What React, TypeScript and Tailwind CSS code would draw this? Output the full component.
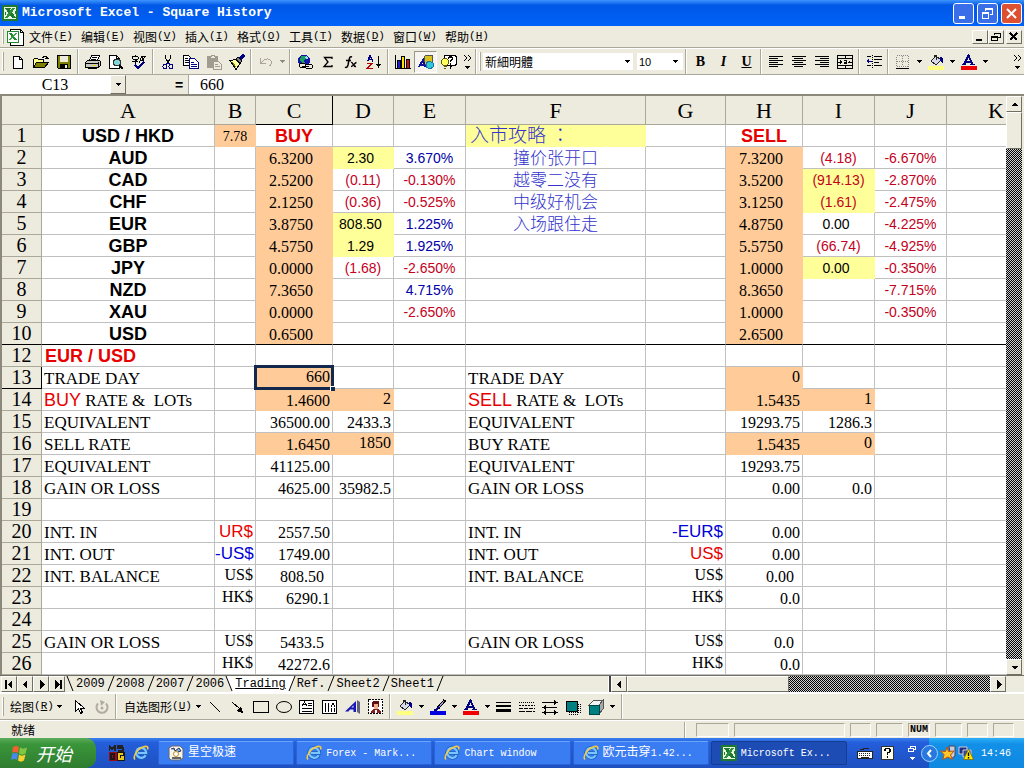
import { useState } from 'react'
import type { ReactNode } from 'react'

// ---------- icons ----------

const Svg = ({ children, w = 16, h = 16, smooth = false }: { children: ReactNode; w?: number; h?: number; smooth?: boolean }) => (
    <svg width={w} height={h} viewBox={`0 0 ${w} ${h}`} fill="none" stroke="none" className="shrink-0" shapeRendering={smooth ? 'auto' : 'crispEdges'} aria-hidden="true">
        {children}
    </svg>
)

const ExcelIcon = () => (
    <Svg>
        <rect width="16" height="16" fill="#1f7a2e" />
        <rect x="2" y="2" width="12" height="12" fill="#e8f4e4" />
        <path d="M3 3h4l7 10h-4z" fill="#1f7a2e" />
        <path d="M10 3h3L6 13H3z" fill="#2f9140" />
        <path d="M7 3h2M3 7v3M13 6v3" stroke="#1f7a2e" />
    </Svg>
)

const SheetIcon = () => (
    <Svg w={18} h={18}>
        <path d="M4 1h10l3 3v13H4z" fill="#fff" stroke="#000" />
        <path d="M14 1v3h3" stroke="#000" />
        <rect x="1" y="3" width="11" height="11" fill="#fff" stroke="#1f8a2e" />
        <path d="M3 5h3l5 7H8z" fill="#1f8a2e" />
        <path d="M9 5h2l-6 7H3z" fill="#39a548" />
    </Svg>
)

const IeIcon = () => (
    <Svg smooth>
        <path d="M12.8 10.2A5.2 5.2 0 1 1 13.4 8H5" stroke="#1d62c4" strokeWidth="3.6" />
        <path d="M12.6 10.2A5 5 0 1 1 13.2 8H5" stroke="#7cc6ff" strokeWidth="2.2" />
        <path d="M2 14.500C-.5 12 4 4 10 2c4-1.600 5.500 0 4.500 2.500" stroke="#f5c945" strokeWidth="1.600" />
    </Svg>
)

const NewIcon = () => (
    <Svg><path d="M3.500 2.500h6l3 3v9h-9z" fill="#fff" stroke="#000" /><path d="M9.500 2.500v3h3" stroke="#000" /></Svg>
)
const OpenIcon = () => (
    <Svg>
        <path d="M.5 13.500v-8l1-1h3l1 1h5v3" fill="#ffff8c" stroke="#000" />
        <path d="M.5 13.500l3-5h12l-4 5z" fill="#808000" stroke="#000" />
        <path d="M9 3h1V2h3v1h1v2M12 4h4" stroke="#000" />
    </Svg>
)
const SaveIcon = () => (
    <Svg>
        <path d="M1.500 1.500h13v13h-12l-1-1z" fill="#808000" stroke="#000" />
        <rect x="4" y="2" width="8" height="6" fill="#edeade" />
        <rect x="4" y="10" width="8" height="4" fill="#000" />
        <rect x="9" y="11" width="2" height="3" fill="#edeade" />
    </Svg>
)
const PrintIcon = () => (
    <Svg>
        <path d="M4.500 6.500l2-5h8l-2 5" fill="#fff" stroke="#000" />
        <path d="M7 3h5M6 5h5" stroke="#000" />
        <path d="M.5 8.500l2-2h12l1 1v4l-2 2h-13z" fill="#c8c8c0" stroke="#000" />
        <path d="M1 9.500h12M13.500 8v5" stroke="#000" />
        <path d="M8 11.500h3" stroke="#e8d800" />
        <path d="M3 14.500h9" stroke="#000" />
    </Svg>
)
const PreviewIcon = () => (
    <Svg>
        <path d="M1.500 1.500h7l3 3v10h-10z" fill="#fff" stroke="#000" />
        <path d="M8.500 1.500v3h3" stroke="#000" />
        <circle cx="9" cy="8.500" r="3.500" fill="#7fd4d4" stroke="#333" />
        <path d="M11.500 11.500l3.500 3.500" stroke="#000" strokeWidth="2" />
    </Svg>
)
const SpellIcon = () => (
    <Svg>
        <path d="M1 2.500h6M4 1v2M1 3v2M7 3v2M2 5.500h4l-2 2v2M1 7.500h6" stroke="#000" />
        <path d="M8 9l3-7 2 7M9 6.500h4M11 2.500h4M14 2l-2 4" stroke="#000" />
        <path d="M4 11l3 3 6-6" stroke="#000080" strokeWidth="2" />
    </Svg>
)
const CutIcon = () => (
    <Svg>
        <path d="M5.500 1v3l3 5M10.500 1v3l-3 5" stroke="#000" />
        <path d="M7.500 9l-2 2M8.500 9l2 2" stroke="#000080" />
        <circle cx="5" cy="12.500" r="2" stroke="#000080" />
        <circle cx="11" cy="12.500" r="2" stroke="#000080" />
    </Svg>
)
const CopyIcon = () => (
    <Svg>
        <path d="M.5 1.500h5l3 3v7h-8z" fill="#fff" stroke="#000" />
        <path d="M2 4.500h3M2 6.500h4M2 8.500h4" stroke="#000" />
        <path d="M6.500 4.500h5l4 4v6h-9z" fill="#fff" stroke="#000080" />
        <path d="M8 8.500h3M8 10.500h6M8 12.500h6" stroke="#000080" />
    </Svg>
)
const PasteIcon = () => (
    <Svg>
        <rect x="1" y="2" width="11" height="12" rx="1" fill="#a09c90" />
        <path d="M4 4V2h1V1h3v1h1v2z" fill="#edeade" stroke="#a09c90" />
        <path d="M7.500 7.500h5l3 3v5h-8z" fill="#edeade" stroke="#a09c90" />
        <path d="M9 10.500h3M9 12.500h5" stroke="#a09c90" />
    </Svg>
)
const BrushIcon = () => (
    <Svg>
        <path d="M1 6.500l6-1 4 4-4 6z" fill="#ffffa0" stroke="#000" />
        <path d="M3 8l4 5" stroke="#808000" />
        <path d="M7 5l2-2 4 4-2 2z" fill="#808080" stroke="#000" />
        <path d="M11 5l4-4" stroke="#000080" strokeWidth="3" />
    </Svg>
)
const UndoIcon = () => (
    <Svg><path d="M2.500 4v5.500H8M3 9l3-3c3-2 6-1 7 1s0 4-2 5" stroke="#a8a498" /></Svg>
)
const GlobeIcon = () => (
    <Svg>
        <circle cx="7" cy="6.500" r="6" fill="#1414a8" />
        <path d="M4 2h4l2 2-3 2 1 3H5L3 6z" fill="#18a060" />
        <path d="M9 3l2 2" stroke="#9fe0ff" strokeWidth="2" />
        <rect x="2.500" y="9.500" width="6" height="4" rx="2" fill="#edeade" stroke="#000" />
        <rect x="8.500" y="10.500" width="7" height="4" rx="2" fill="#edeade" stroke="#000" />
        <path d="M5 12.500h7" stroke="#000" />
    </Svg>
)
const SigmaIcon = () => (
    <Svg smooth><path d="M12 5V3.500H4.500L8 8l-4 4.500h8V11" stroke="#000" strokeWidth="1.300" /></Svg>
)
const FxIcon = () => (
    <Svg smooth>
        <path d="M9 3c-2-1-2.500.5-3 3l-1 5c-.5 2-1.500 3-3 2M3 6.500h5" stroke="#000" strokeWidth="1.500" />
        <path d="M8 8.500c2-1 2 4.500 5 4M13.500 8.500c-2 0-3 4-5.500 4" stroke="#000" strokeWidth="1.400" />
    </Svg>
)
const SortIcon = () => (
    <Svg>
        <path d="M1.500 7.500l2.500-6 3 6M2.500 5.500h4" stroke="#000080" strokeWidth="1.500" />
        <path d="M1 9.500h5L1.500 14.500H7" stroke="#b00000" strokeWidth="1.500" />
        <path d="M12.500 2v11" stroke="#000" />
        <path d="M10 10h5l-2.500 4z" fill="#000" />
    </Svg>
)
const ChartIcon = () => (
    <Svg>
        <path d="M.5 1v13.500h15" stroke="#000" />
        <path d="M2.500 6.500h3v8h-3z" fill="#2020d0" stroke="#000" />
        <path d="M6.500 2.500h3v12h-3z" fill="#ffe000" stroke="#000" />
        <path d="M11.500 5.500h3v9h-3z" fill="#d01010" stroke="#000" />
    </Svg>
)
const DrawingIcon = () => (
    <Svg>
        <path d="M6 3l2-2h6v7l-2 2H6z" fill="#d8c020" stroke="#555" />
        <path d="M1 13l4-7 2 7M3 10.500h4" stroke="#1010a0" strokeWidth="2" />
        <path d="M8 9l3-2 4 2v4l-3 2-4-2z" fill="#30c8d8" stroke="#1878a0" />
    </Svg>
)
const HelpIcon = () => (
    <Svg>
        <path d="M3 1.500h11l1.500 1.500v7l-1.500 1.500h-3l-2 3v-3H3z" fill="#fff" stroke="#000" />
        <path d="M7.500 5V4l1-1h2l1 1v1.500l-2 1.500v1M9.500 9v1.500" stroke="#000" strokeWidth="1.500" />
        <circle cx="4" cy="8" r="3.500" fill="#ffff60" stroke="#605800" />
        <path d="M3 12.500h3M3 14.500h2" stroke="#605800" />
    </Svg>
)
const AlignIcon = ({ offset }: { offset: number }) => (
    <Svg>
        <path d="M1 2.500h14M1 6.500h14M1 10.500h14" stroke="#000" />
        <path d={`M${1 + offset} 4.500h9M${1 + offset} 8.500h9M${1 + offset} 12.500h9`} stroke="#000" />
    </Svg>
)
const MergeIcon = () => (
    <Svg>
        <path d="M.5 1.500h15v13H.5zM0 4.500h16M0 11.500h16M8.500 1v3M8.500 12v3" stroke="#000" />
        <path d="M1 8h4M11 8h4" stroke="#000" />
        <path d="M3 6v4l2-2zM13 6v4l-2-2z" fill="#000" />
        <path d="M7 6.500h2.500v3H7v-1.500h2" stroke="#000" />
    </Svg>
)
const IndentIcon = () => (
    <Svg>
        <path d="M1 2.500h4M8 2.500h8M8 5.500h8M8 8.500h5M1 11.500h4M8 11.500h8" stroke="#000" strokeWidth="1.500" />
        <path d="M6.500 1v14" stroke="#000" strokeDasharray="1 1" />
        <path d="M1 7h5" stroke="#000080" />
        <path d="M0 7l3-3v6z" fill="#000080" />
    </Svg>
)
const BordersIcon = () => (
    <Svg>
        <path d="M1.500 1.500h12v11h-12zM7.500 2v10M2 7.500h11" stroke="#888" strokeDasharray="1 1" />
        <path d="M1 14.500h13" stroke="#000" />
    </Svg>
)
const BucketIcon = () => (
    <Svg>
        <path d="M3 7l5-5 5 4-5 5z" fill="#d8d8e8" stroke="#222" />
        <path d="M6 4V1h2v5" stroke="#222" />
        <path d="M12 3c3 0 4 3 3 7-1-2-2-3-3-3z" fill="#000080" />
        <rect y="12" width="16" height="4" fill="#ffff80" />
    </Svg>
)
const FontColorIcon = () => (
    <Svg>
        <path d="M3 10.500l4.500-9 4 9M5 7.500h5" stroke="#000080" strokeWidth="2" />
        <path d="M1 10.500h4M9 10.500h5" stroke="#000080" />
        <rect y="12" width="16" height="4" fill="#f00000" />
    </Svg>
)
const LineColorIcon = () => (
    <Svg>
        <path d="M15 1L8 9" stroke="#000" strokeWidth="3" />
        <path d="M14 2L9 8" stroke="#9a9ad0" />
        <path d="M8 7l2 2-4 3-4-1 3-1z" fill="#000080" />
        <rect y="12" width="16" height="4" fill="#0000e0" />
    </Svg>
)
const PointerIcon = () => (
    <Svg><path d="M4.500 1.500v11l3-3 2 5 2-1-2-4h4z" fill="#fff" stroke="#000" /></Svg>
)
const RotateIcon = () => (
    <Svg smooth>
        <path d="M4 4.500a5.500 5.500 0 1 0 8 0" stroke="#b0aca0" strokeWidth="2" />
        <path d="M6 1l5 2-4 4z" fill="#b0aca0" />
        <circle cx="8" cy="9" r="1.500" fill="#b0aca0" />
    </Svg>
)
const LineIcon = () => <Svg><path d="M3 3l10 10" stroke="#000" /></Svg>
const ArrowIcon = () => <Svg><path d="M2 3l8 7" stroke="#000" /><path d="M13 14l-7-2 5-5z" fill="#000" /></Svg>
const RectIcon = () => <Svg><rect x=".5" y="2.500" width="15" height="11" stroke="#000" /></Svg>
const OvalIcon = () => <Svg smooth><ellipse cx="8" cy="8" rx="7.500" ry="5.500" stroke="#000" /></Svg>
const TextBoxIcon = () => (
    <Svg>
        <path d="M.5 1.500h14v13H.5z" fill="#fff" stroke="#000" strokeWidth="1.500" />
        <path d="M3 7l2.500-4L8 7M4 5.500h3M9 4.500h4M9 6.500h4M3 9.500h10M3 12.500h10" stroke="#000" />
    </Svg>
)
const VertTextIcon = () => (
    <Svg>
        <path d="M.5 1.500h14v13H.5z" fill="#fff" stroke="#000" strokeWidth="1.500" />
        <path d="M3.500 4v9M6.500 4v9M9.500 9v4M12.500 9v4M9 8l2-4 2 4" stroke="#000" />
    </Svg>
)
const WordArtIcon = () => (
    <Svg smooth>
        <path d="M12 1l3 2v12l-3-2z" fill="#606080" />
        <path d="M0 12.500L11 2v11H8.500v-2.500H5L3.500 12.500z" fill="#1818b8" />
        <path d="M6.500 8.500l2-2.200v2.200z" fill="#edeade" />
    </Svg>
)
const ClipArtIcon = () => (
    <Svg>
        <rect x=".5" y=".5" width="14" height="14" fill="#fff" stroke="#000" strokeDasharray="2 1" />
        <path d="M5 2h5l1 1v5H4V3z" fill="#601010" />
        <path d="M6 5h4v5H6z" fill="#f0b090" />
        <path d="M3 14c0-3 2-4 5-4s5 1 5 4z" fill="#802020" />
        <path d="M7 11h2v3H7z" fill="#fff" />
    </Svg>
)
const LineStyleIcon = () => <Svg><path d="M0 3.500h15" stroke="#000" /><path d="M0 7h15" stroke="#000" strokeWidth="2" /><path d="M0 11.500h15" stroke="#000" strokeWidth="3" /></Svg>
const DashStyleIcon = () => (
    <Svg>
        <path d="M0 3.500h16" stroke="#000" strokeDasharray="1 1" />
        <path d="M0 6.500h16" stroke="#000" strokeDasharray="2 1" />
        <path d="M0 9.500h16" stroke="#000" strokeDasharray="4 1" />
        <path d="M0 12.500h16" stroke="#000" strokeDasharray="6 1" />
    </Svg>
)
const ArrowStyleIcon = () => (
    <Svg>
        <path d="M0 3.500h14M1 8.500h14M1 13.500h14" stroke="#000" />
        <path d="M12 1l4 2.500L12 6zM4 6L0 8.500 4 11zM12 11l4 2.500-4 2.500zM4 11l-4 2.500L4 16z" fill="#000" />
    </Svg>
)
const ShadowIcon = () => (
    <Svg>
        <path d="M4 13.500h10M4 15h10M13.500 5v10M15 5v10" stroke="#000" strokeDasharray="1 1" />
        <rect x="1.500" y="2.500" width="11" height="10" fill="#008080" stroke="#000" />
    </Svg>
)
const CubeIcon = () => (
    <Svg>
        <path d="M1 6l5-5h9l-4 5z" fill="#f4f4f4" stroke="#555" />
        <path d="M11 6l4-5v9l-4 5z" fill="#a8a8a8" stroke="#555" />
        <rect x="1" y="6" width="10" height="9" fill="#008080" stroke="#044" />
    </Svg>
)
const Caret = () => (
    <Svg w={5} h={3}><path d="M0 0h5L2.500 3z" fill="#000" /></Svg>
)
const MoreIcon = () => (
    <Svg w={9} h={16}><path d="M1 1l3 3-3 3M5 1l3 3-3 3" stroke="#000" strokeWidth="1.300" /><path d="M2 12h5l-2.500 3z" fill="#000" /></Svg>
)
const Tri = ({ d }: { d: string }) => <Svg w={9} h={9}><path d={d} fill="#000" /></Svg>
const TRI_LEFT = 'M6 0v9L1.500 4.500z'
const TRI_RIGHT = 'M3 0v9l4.500-4.500z'
const TRI_UP = 'M1 6h7L4.500 2.500z'
const TRI_DOWN = 'M1 3h7L4.500 6.500z'

// ---------- toolbar parts ----------

const ToolButton = ({ label, children, pressed = false }: { label: string; children: ReactNode; pressed?: boolean }) => (
    <button
        aria-label={label}
        className={`flex h-[22px] w-[23px] shrink-0 items-center justify-center ${pressed ? 'border border-t-[#9a968a] border-r-white border-b-white border-l-[#9a968a] bg-[#f6f4ee]' : ''}`}
    >
        {children}
    </button>
)

const CaretButton = ({ label }: { label: string }) => (
    <button aria-label={label} className="flex h-[22px] w-[10px] shrink-0 items-center justify-center"><Caret /></button>
)

const Sep = () => (
    <div className="flex w-[6px] shrink-0 justify-center self-stretch">
        <div className="w-[2px] border-l border-[#aca899] bg-white" />
    </div>
)

const Grip = () => <div className="mx-[2px] my-[3px] w-[2px] shrink-0 self-stretch border-r border-[#aca899] bg-white" />

const MenuLabel = ({ text, hot }: { text: string; hot: string }) => (
    <>
        {text}
        <span className="font-['Liberation_Mono',monospace] text-[11px]">(<u>{hot}</u>)</span>
    </>
)

const menus = [
    ['文件', 'F'],
    ['编辑', 'E'],
    ['视图', 'V'],
    ['插入', 'I'],
    ['格式', 'O'],
    ['工具', 'T'],
    ['数据', 'D'],
    ['窗口', 'W'],
    ['帮助', 'H'],
]

const TitleBar = () => (
    <header className="flex h-[26px] items-center gap-[3px] bg-linear-to-b from-[#3c94fe] via-[#0058e6] via-20% to-[#0062fa] px-[2px]">
        <ExcelIcon />
        <h1 className="ml-[1px] flex-1 whitespace-nowrap font-['Liberation_Mono',monospace] text-[13px] font-bold text-white">Microsoft Excel - Square History</h1>
        <button aria-label="Minimize" className="flex h-[21px] w-[21px] items-center justify-center rounded-[3px] border border-white bg-[#3a6ee8]">
            <Svg w={13} h={13}><path d="M2 9h6v3H2z" fill="#fff" /></Svg>
        </button>
        <button aria-label="Restore" className="flex h-[21px] w-[21px] items-center justify-center rounded-[3px] border border-white bg-[#3a6ee8]">
            <Svg w={13} h={13}><path d="M4.500 4V1.500h7v6H9" stroke="#fff" /><path d="M4 2h8" stroke="#fff" strokeWidth="2" /><path d="M1.500 5.500h6v6h-6z" stroke="#fff" /><path d="M1 6h7" stroke="#fff" strokeWidth="2" /></Svg>
        </button>
        <button aria-label="Close" className="flex h-[21px] w-[21px] items-center justify-center rounded-[3px] border border-white bg-[#dd5030]">
            <Svg w={13} h={13} smooth><path d="M2 2l9 9M11 2l-9 9" stroke="#fff" strokeWidth="2" /></Svg>
        </button>
    </header>
)

const smallBtn = 'flex h-[14px] w-[16px] items-center justify-center border border-t-white border-r-[#716f64] border-b-[#716f64] border-l-white'

const MenuBar = () => (
    <nav className="flex h-[22px] items-center border-b border-[#aca899] pr-[2px] text-[12px]">
        <Grip />
        <SheetIcon />
        <div className="flex flex-1 pl-[1px]">
            {menus.map(([text, hot]) => (
                <button key={hot} className="flex w-[52px] shrink-0 items-center justify-center whitespace-nowrap">
                    <MenuLabel text={text} hot={hot} />
                </button>
            ))}
        </div>
        <button aria-label="Minimize workbook" className={smallBtn}><Svg w={10} h={10}><path d="M1 8h6" stroke="#000" strokeWidth="2" /></Svg></button>
        <button aria-label="Restore workbook" className={smallBtn}><Svg w={10} h={10}><path d="M3.500 3V1.500h6v4H7M3 1.500h7M.5 4.500h6v4h-6zM0 5.500h7" stroke="#000" /></Svg></button>
        <button aria-label="Close workbook" className={`ml-[2px] ${smallBtn}`}><Svg w={10} h={10}><path d="M1 1l7 7M8 1L1 8" stroke="#000" strokeWidth="2" /></Svg></button>
    </nav>
)

const Toolbars = () => (
    <div className="flex h-[27px] items-center border-t border-b border-t-white border-b-[#aca899]">
        <Grip />
        <ToolButton label="New"><NewIcon /></ToolButton>
        <ToolButton label="Open"><OpenIcon /></ToolButton>
        <ToolButton label="Save"><SaveIcon /></ToolButton>
        <Sep />
        <ToolButton label="Print"><PrintIcon /></ToolButton>
        <ToolButton label="Print preview"><PreviewIcon /></ToolButton>
        <ToolButton label="Spelling"><SpellIcon /></ToolButton>
        <Sep />
        <ToolButton label="Cut"><CutIcon /></ToolButton>
        <ToolButton label="Copy"><CopyIcon /></ToolButton>
        <ToolButton label="Paste"><PasteIcon /></ToolButton>
        <ToolButton label="Format painter"><BrushIcon /></ToolButton>
        <Sep />
        <ToolButton label="Undo"><UndoIcon /></ToolButton>
        <button aria-label="Undo list" className="flex h-[22px] w-[10px] shrink-0 items-center justify-center opacity-40"><Caret /></button>
        <Sep />
        <ToolButton label="Insert hyperlink"><GlobeIcon /></ToolButton>
        <ToolButton label="AutoSum"><SigmaIcon /></ToolButton>
        <ToolButton label="Paste function"><FxIcon /></ToolButton>
        <ToolButton label="Sort ascending"><SortIcon /></ToolButton>
        <Sep />
        <ToolButton label="Chart wizard"><ChartIcon /></ToolButton>
        <ToolButton label="Drawing" pressed><DrawingIcon /></ToolButton>
        <ToolButton label="Help"><HelpIcon /></ToolButton>
        <button aria-label="More buttons" className="flex w-[15px] shrink-0 justify-center"><MoreIcon /></button>
        <div className="w-[2px] self-stretch border-l border-[#aca899] bg-white" />
        <Grip />
        <div className="flex h-[17px] w-[150px] shrink-0 items-center bg-white pr-[3px]">
            <select aria-label="Font" className="h-[17px] flex-1 appearance-none pl-[2px] font-['Noto_Sans_CJK_TC',sans-serif] text-[12px] leading-[16px]">
                <option>新細明體</option>
            </select>
            <Caret />
        </div>
        <div className="ml-[4px] flex h-[17px] w-[46px] shrink-0 items-center bg-white pr-[5px]">
            <select aria-label="Font size" className="h-[17px] w-[30px] flex-1 appearance-none pl-[2px] font-['Liberation_Sans',sans-serif] text-[11px] leading-[16px]">
                <option>10</option>
            </select>
            <Caret />
        </div>
        <Sep />
        <ToolButton label="Bold"><span className="font-['Liberation_Serif',serif] text-[14px] font-bold">B</span></ToolButton>
        <ToolButton label="Italic"><span className="font-['Liberation_Serif',serif] text-[14px] font-bold italic">I</span></ToolButton>
        <ToolButton label="Underline"><span className="font-['Liberation_Serif',serif] text-[14px] font-bold underline">U</span></ToolButton>
        <Sep />
        <ToolButton label="Align left"><AlignIcon offset={0} /></ToolButton>
        <ToolButton label="Center"><AlignIcon offset={2} /></ToolButton>
        <ToolButton label="Align right"><AlignIcon offset={5} /></ToolButton>
        <ToolButton label="Merge and center"><MergeIcon /></ToolButton>
        <Sep />
        <ToolButton label="Decrease indent"><IndentIcon /></ToolButton>
        <Sep />
        <ToolButton label="Borders"><BordersIcon /></ToolButton>
        <CaretButton label="Border list" />
        <ToolButton label="Fill color"><BucketIcon /></ToolButton>
        <CaretButton label="Fill color list" />
        <ToolButton label="Font color"><FontColorIcon /></ToolButton>
        <CaretButton label="Font color list" />
        <div className="flex-1" />
        <button aria-label="More formatting buttons" className="mr-[2px] shrink-0"><MoreIcon /></button>
    </div>
)

const FormulaBar = () => {
    const [name, setName] = useState('C13')
    const [formula, setFormula] = useState('660')
    return (
        <div className="flex h-[21px] items-stretch border-b-2 border-[#8c897c] font-['Liberation_Serif',serif] text-[16px]">
            <input aria-label="Name box" value={name} onChange={(e) => setName(e.target.value)} className="w-[110px] bg-white text-center" />
            <button aria-label="Names" className="flex w-[16px] items-center justify-center border border-t-white border-r-[#716f64] border-b-[#716f64] border-l-white"><Caret /></button>
            <div className="w-[44px]" />
            <button aria-label="Edit formula" className="w-[18px] font-['Liberation_Sans',sans-serif] text-[14px] leading-[18px] font-bold">=</button>
            <input aria-label="Formula" value={formula} onChange={(e) => setFormula(e.target.value)} className="min-w-0 flex-1 border-l border-[#aca899] bg-white pl-[11px]" />
        </div>
    )
}

// ---------- sheet ----------

type Fill = 'orange' | 'yellow'
type Cell = { v: ReactNode; s: string; fill?: Fill }
type Row = { n: number; cells: Record<string, Cell> }

const cols = ['A', 'B', 'C', 'D', 'E', 'F', 'G', 'H', 'I', 'J', 'K']

// text styles
const code = "text-center font-['Liberation_Sans',sans-serif] text-[18px] font-bold pt-[2px]"
const rate = "text-center font-['Liberation_Serif',serif] text-[16px] pt-[3px] pr-[6px]"
const num = "text-right font-['Liberation_Serif',serif] text-[16px] pt-[3px] pr-[2px]"
const numIn = "text-right font-['Liberation_Serif',serif] text-[16px] pt-[3px] pr-[8px]"
const numUp = "text-right font-['Liberation_Serif',serif] text-[16px] pt-[1px] pr-[2px]"
const label = "font-['Liberation_Serif',serif] text-[17px] pt-[3px] pl-[2px]"
const mixed = "font-['Liberation_Serif',serif] text-[17px] pt-[2px] pl-[2px]"
const small = "text-center font-['Liberation_Sans',sans-serif] text-[14px] pt-[2px]"
const cur = "text-right font-['Liberation_Sans',sans-serif] text-[17px] pt-[2px] pr-[2px]"
const tip = "text-center font-['Liberation_Serif','Noto_Sans_CJK_SC',sans-serif] text-[17px] font-light pt-[3px] text-[#3333cc]"
const tipHead = "font-['Liberation_Serif','Noto_Sans_CJK_SC',sans-serif] text-[19px] font-light pt-[2px] pl-[4px] text-[#3333cc]"

const pos = (v: string, fill?: Fill): Cell => ({ v, s: `${small} pr-[5px]`, fill })
const neg = (v: string, fill?: Fill): Cell => ({ v, s: `${small} text-[#c4001c]`, fill })
const pct = (v: string): Cell => ({ v, s: v.startsWith('-') ? `${small} text-[#c4001c]` : `${small} text-[#0000a8]` })
const orange = (v: string, s: string): Cell => ({ v, s, fill: 'orange' })
const text = (v: ReactNode, s: string = label): Cell => ({ v, s })

const red = 'text-[#e80000]'
const blue = 'text-[#0000d8]'

const rows: Row[] = [
    {
        n: 1,
        cells: {
            A: text('USD / HKD', code),
            B: orange('7.78', "text-center font-['Liberation_Serif',serif] text-[14px] pt-[3px]"),
            C: text('BUY', `${code} ${red}`),
            F: { v: <>入市攻略 <span className="font-['Liberation_Serif','Noto_Sans_CJK_TC',sans-serif]">：</span></>, s: tipHead, fill: 'yellow' },
            H: text('SELL', `${code} ${red}`),
        },
    },
    { n: 2, cells: { A: text('AUD', code), C: orange('6.3200', rate), D: pos('2.30', 'yellow'), E: pct('3.670%'), F: text('撞价张开口', tip), H: orange('7.3200', rate), I: neg('(4.18)'), J: pct('-6.670%') } },
    { n: 3, cells: { A: text('CAD', code), C: orange('2.5200', rate), D: neg('(0.11)'), E: pct('-0.130%'), F: text('越零二没有', tip), H: orange('3.5200', rate), I: neg('(914.13)', 'yellow'), J: pct('-2.870%') } },
    { n: 4, cells: { A: text('CHF', code), C: orange('2.1250', rate), D: neg('(0.36)'), E: pct('-0.525%'), F: text('中级好机会', tip), H: orange('3.1250', rate), I: neg('(1.61)', 'yellow'), J: pct('-2.475%') } },
    { n: 5, cells: { A: text('EUR', code), C: orange('3.8750', rate), D: pos('808.50', 'yellow'), E: pct('1.225%'), F: text('入场跟住走', tip), H: orange('4.8750', rate), I: pos('0.00'), J: pct('-4.225%') } },
    { n: 6, cells: { A: text('GBP', code), C: orange('4.5750', rate), D: pos('1.29', 'yellow'), E: pct('1.925%'), H: orange('5.5750', rate), I: neg('(66.74)'), J: pct('-4.925%') } },
    { n: 7, cells: { A: text('JPY', code), C: orange('0.0000', rate), D: neg('(1.68)'), E: pct('-2.650%'), H: orange('1.0000', rate), I: pos('0.00', 'yellow'), J: pct('-0.350%') } },
    { n: 8, cells: { A: text('NZD', code), C: orange('7.3650', rate), E: pct('4.715%'), H: orange('8.3650', rate), J: pct('-7.715%') } },
    { n: 9, cells: { A: text('XAU', code), C: orange('0.0000', rate), E: pct('-2.650%'), H: orange('1.0000', rate), J: pct('-0.350%') } },
    { n: 10, cells: { A: text('USD', code), C: orange('0.6500', rate), H: orange('2.6500', rate) } },
    { n: 12, cells: { A: text('EUR / USD', "font-['Liberation_Sans',sans-serif] text-[18px] font-bold pt-[2px] pl-[3px] text-[#e80000]") } },
    { n: 13, cells: { A: text('TRADE DAY'), C: orange('660', numUp), F: text('TRADE DAY'), H: orange('0', numUp) } },
    {
        n: 14,
        cells: {
            A: text(<><span className="font-['Liberation_Sans',sans-serif] text-[18px] text-[#e80000]">BUY</span>{' RATE &  LOTs'}</>, mixed),
            C: orange('1.4600', num),
            D: orange('2', numUp),
            F: text(<><span className="font-['Liberation_Sans',sans-serif] text-[18px] text-[#e80000]">SELL</span>{' RATE &  LOTs'}</>, mixed),
            H: orange('1.5435', num),
            I: orange('1', numUp),
        },
    },
    { n: 15, cells: { A: text('EQUIVALENT'), C: text('36500.00', num), D: text('2433.3', num), F: text('EQUIVALENT'), H: text('19293.75', num), I: text('1286.3', num) } },
    { n: 16, cells: { A: text('SELL RATE'), C: orange('1.6450', num), D: orange('1850', numUp), F: text('BUY RATE'), H: orange('1.5435', num), I: orange('0', numUp) } },
    { n: 17, cells: { A: text('EQUIVALENT'), C: text('41125.00', num), F: text('EQUIVALENT'), H: text('19293.75', num) } },
    { n: 18, cells: { A: text('GAIN OR LOSS'), C: text('4625.00', num), D: text('35982.5', num), F: text('GAIN OR LOSS'), H: text('0.00', num), I: text('0.0', num) } },
    { n: 19, cells: {} },
    { n: 20, cells: { A: text('INT. IN'), B: text('UR$', `${cur} ${red}`), C: text('2557.50', num), F: text('INT. IN'), G: text('-EUR$', `${cur} ${blue}`), H: text('0.00', num) } },
    { n: 21, cells: { A: text('INT. OUT'), B: text('-US$', `${cur} ${blue}`), C: text('1749.00', num), F: text('INT. OUT'), G: text('US$', `${cur} ${red}`), H: text('0.00', num) } },
    { n: 22, cells: { A: text('INT. BALANCE'), B: text('US$', numUp), C: text('808.50', numIn), F: text('INT. BALANCE'), G: text('US$', numUp), H: text('0.00', numIn) } },
    { n: 23, cells: { B: text('HK$', numUp), C: text('6290.1', num), G: text('HK$', numUp), H: text('0.0', num) } },
    { n: 24, cells: {} },
    { n: 25, cells: { A: text('GAIN OR LOSS'), B: text('US$', numUp), C: text('5433.5', numIn), F: text('GAIN OR LOSS'), G: text('US$', numUp), H: text('0.0', numIn) } },
    { n: 26, cells: { B: text('HK$', numUp), C: text('42272.6', num), G: text('HK$', numUp), H: text('0.0', num) } },
]

const fillClass = (fill?: Fill) => {
    if (fill === 'orange') return 'bg-[#ffcc99] border-[#ffcc99]'
    if (fill === 'yellow') return 'bg-[#ffff99] border-[#ffff99]'
    return 'bg-white border-[#c0c0c0]'
}

const Sheet = () => (
    <table className="w-full flex-1 table-fixed border-separate border-spacing-0">
        <colgroup>
            <col className="w-[40px]" />
            <col className="w-[173px]" />
            <col className="w-[41px]" />
            <col className="w-[77px]" />
            <col className="w-[61px]" />
            <col className="w-[72px]" />
            <col className="w-[180px]" />
            <col className="w-[80px]" />
            <col className="w-[77px]" />
            <col className="w-[72px]" />
            <col className="w-[72px]" />
            <col />
        </colgroup>
        <thead>
            <tr className="h-[29px] bg-[#edeade] font-['Liberation_Serif',serif] text-[22px] leading-[26px]">
                <th className="border-r border-b border-[#aca899]" aria-label="Select all" />
                {cols.map((c) => (
                    <th
                        key={c}
                        scope="col"
                        className={`overflow-hidden border-r border-b p-0 pt-[2px] font-normal ${c === 'C' ? 'border-black' : 'border-[#aca899]'} ${c === 'K' ? 'border-r-0 pr-[2px] text-right' : 'text-center'}`}
                    >
                        {c}
                    </th>
                ))}
            </tr>
        </thead>
        <tbody>
            {rows.map((row) => (
                <tr key={row.n} className="h-[22px]">
                    <th
                        scope="row"
                        className={`border-r border-b bg-[#edeade] p-0 text-center font-['Liberation_Serif',serif] text-[20px] leading-[21px] font-normal ${row.n === 13 ? 'border-black' : 'border-[#aca899]'} ${row.n === 10 ? 'border-b-black' : ''}`}
                    >
                        {row.n}
                    </th>
                    {cols.map((c) => {
                        const cell = row.cells[c]
                        const active = c === 'C' && row.n === 13
                        return (
                            <td
                                key={c}
                                className={`h-[22px] border-r border-b p-0 align-top leading-[18px] whitespace-pre ${fillClass(cell?.fill)} ${row.n === 10 ? 'border-b-black' : ''} ${c === 'K' ? 'border-r-0' : ''} ${active ? 'relative' : 'overflow-hidden'} ${cell ? cell.s : ''}`}
                            >
                                {cell?.v}
                                {active && (
                                    <span className="absolute -inset-[2px] border-[3px] border-[#12284c]">
                                        <span className="absolute -right-[4px] -bottom-[4px] h-[5px] w-[5px] border-t border-l border-white bg-[#12284c]" />
                                    </span>
                                )}
                            </td>
                        )
                    })}
                </tr>
            ))}
        </tbody>
    </table>
)

const dither = 'bg-[repeating-conic-gradient(#000000_0_25%,#d0d0d0_0_50%)] bg-[length:2px_2px]'
const raised = 'border border-t-white border-r-[#716f64] border-b-[#716f64] border-l-white bg-[#edeade]'

const VerticalScroll = () => (
    <div className={`mr-[2px] flex w-[16px] shrink-0 flex-col ${dither}`}>
        <button aria-label="Scroll up" className={`flex h-[16px] items-center justify-center ${raised}`}><Tri d={TRI_UP} /></button>
        <div className={`h-[37px] ${raised}`} />
        <div className="flex-1" />
        <button aria-label="Scroll down" className={`flex h-[16px] items-center justify-center ${raised}`}><Tri d={TRI_DOWN} /></button>
    </div>
)

// ---------- sheet tabs ----------

const tabs = ['2009', '2008', '2007', '2006', 'Trading', 'Ref.', 'Sheet2', 'Sheet1']

const Slash = ({ back = false, white = '' }: { back?: boolean; white?: string }) => (
    <Svg w={11} h={16} smooth>
        {white && <path d={white} fill="#fff" />}
        <path d={back ? 'M2 0l6 15' : 'M9 0L3 15'} stroke="#000" />
    </Svg>
)

const TabBar = () => {
    const [current, setCurrent] = useState('Trading')
    const nav = [
        ['First sheet', 'M0 0h2v9H0zM7 0v9L2.500 4.500z'],
        ['Previous sheet', TRI_LEFT],
        ['Next sheet', TRI_RIGHT],
        ['Last sheet', 'M7 0h2v9H7zM2 0v9l4.500-4.500z'],
    ]
    return (
        <div className="flex h-[17px] items-stretch border-t border-[#716f64] pl-[1px]">
            {nav.map(([name, d]) => (
                <button key={name} aria-label={name} className={`flex w-[16px] shrink-0 items-center justify-center ${raised}`}><Tri d={d} /></button>
            ))}
            <div className="flex flex-1 items-stretch overflow-hidden">
                <Slash back />
                {tabs.map((tab, i) => {
                    const on = tab === current
                    const nextOn = tabs[i + 1] === current
                    return (
                        <div key={tab} className="flex shrink-0">
                            <button
                                onClick={() => setCurrent(tab)}
                                className={`font-['Liberation_Mono',monospace] text-[12px] leading-[16px] ${on ? 'bg-white underline' : ''}`}
                            >
                                {tab}
                            </button>
                            {nextOn ? <Slash back white="M2 0h9v16H8z" /> : <Slash white={on ? 'M0 0h9L3 16H0z' : ''} />}
                        </div>
                    )
                })}
            </div>
            <div className="flex w-[416px] shrink-0">
                <div className="w-[3px] border-r-2 border-l border-r-[#444] border-l-white" />
                <button aria-label="Scroll left" className={`flex w-[16px] items-center justify-center ${raised}`}><Tri d={TRI_LEFT} /></button>
                <div className={`flex flex-1 ${dither}`}>
                    <div className={`w-[162px] ${raised}`} />
                </div>
                <button aria-label="Scroll right" className={`flex w-[16px] items-center justify-center ${raised}`}><Tri d={TRI_RIGHT} /></button>
                <div className="w-[18px]" />
            </div>
        </div>
    )
}

const DrawingBar = () => (
    <div className="flex h-[28px] items-center border-t-2 border-b border-t-white border-b-[#aca899] text-[12px]">
        <Grip />
        <button className="flex w-[48px] shrink-0 items-center justify-center whitespace-nowrap pl-[4px]"><MenuLabel text="绘图" hot="R" /></button>
        <CaretButton label="Draw menu" />
        <div className="w-[3px]" />
        <ToolButton label="Select objects"><PointerIcon /></ToolButton>
        <ToolButton label="Free rotate"><RotateIcon /></ToolButton>
        <Sep />
        <button className="flex w-[74px] shrink-0 items-center justify-center whitespace-nowrap pl-[4px]"><MenuLabel text="自选图形" hot="U" /></button>
        <CaretButton label="AutoShapes menu" />
        <ToolButton label="Line"><LineIcon /></ToolButton>
        <ToolButton label="Arrow"><ArrowIcon /></ToolButton>
        <ToolButton label="Rectangle"><RectIcon /></ToolButton>
        <ToolButton label="Oval"><OvalIcon /></ToolButton>
        <ToolButton label="Text box"><TextBoxIcon /></ToolButton>
        <ToolButton label="Vertical text box"><VertTextIcon /></ToolButton>
        <ToolButton label="WordArt"><WordArtIcon /></ToolButton>
        <ToolButton label="Clip art"><ClipArtIcon /></ToolButton>
        <Sep />
        <ToolButton label="Fill color"><BucketIcon /></ToolButton>
        <CaretButton label="Fill colors" />
        <ToolButton label="Line color"><LineColorIcon /></ToolButton>
        <CaretButton label="Line colors" />
        <ToolButton label="Font color"><FontColorIcon /></ToolButton>
        <CaretButton label="Font colors" />
        <ToolButton label="Line style"><LineStyleIcon /></ToolButton>
        <ToolButton label="Dash style"><DashStyleIcon /></ToolButton>
        <ToolButton label="Arrow style"><ArrowStyleIcon /></ToolButton>
        <ToolButton label="Shadow"><ShadowIcon /></ToolButton>
        <ToolButton label="3-D"><CubeIcon /></ToolButton>
        <CaretButton label="More drawing buttons" />
        <div className="ml-[4px] w-[2px] self-stretch border-l border-[#aca899] bg-white" />
    </div>
)

const panel = 'h-[14px] border border-t-[#aca899] border-r-white border-b-white border-l-[#aca899]'

const StatusBar = () => (
    <footer className="flex h-[18px] items-center gap-[5px] border-t border-white pr-[10px] text-[12px] leading-[14px]">
        <span className="flex-1 pl-[11px]">就绪</span>
        <div className="mr-[5px] h-[16px] w-[2px] border-l border-[#aca899] bg-white" />
        <div className={`w-[33px] ${panel}`} />
        <div className={`w-[111px] ${panel}`} />
        <div className={`w-[21px] ${panel}`} />
        <div className={`w-[27px] ${panel}`} />
        <div className={`flex w-[22px] items-center justify-center font-['Liberation_Mono',monospace] text-[10px] font-bold ${panel}`}>NUM</div>
        <div className={`w-[27px] ${panel}`} />
        <div className={`w-[21px] ${panel}`} />
        <div className={`w-[21px] ${panel}`} />
    </footer>
)

// ---------- task bar ----------

const FlagIcon = () => (
    <Svg w={18} h={18} smooth>
        <path d="M2 3c2-1.500 4-1.500 6 0l-1 6C5 7.500 3 7.500 1 9z" fill="#f06030" />
        <path d="M9 3.500c2 1.500 4 1.500 7 0l-1.500 6C12 11 10 11 8 9.500z" fill="#80c840" />
        <path d="M1 10c2-1.500 4-1.500 6 0l-1 6c-2-1.500-4-1.500-6 0z" fill="#4888e8" />
        <path d="M8 10.500c2 1.500 4 1.500 6.500 0l-1.500 6c-2.500 1.500-4 1.500-6 0z" fill="#f8d030" />
    </Svg>
)
const DosIcon = () => (
    <Svg>
        <path d="M0 6V1l3 3 3-3v5M14 1H9v2h5v3H9" stroke="#222" strokeWidth="2" />
        <rect y="7" width="8" height="9" fill="#a00818" />
        <rect x="8" y="7" width="8" height="9" fill="#181818" />
        <path d="M2 9h3v5H2z" stroke="#181818" strokeWidth="1.500" />
        <path d="M14 9h-4v5h4v-2h-2" stroke="#e8c820" strokeWidth="1.500" />
    </Svg>
)
const StarNetIcon = () => (
    <Svg smooth>
        <path d="M1 3l3-2h8l3 3v9l-3 2H3l-2-2z" fill="#f4f4ec" stroke="#667" />
        <path d="M3 4l3-1 1 3 4-3 2 3-3 1" fill="#7ab0e0" stroke="#335" />
        <circle cx="8" cy="9" r="2.500" fill="#fff" stroke="#c09020" />
        <path d="M4 13h9" stroke="#333" strokeWidth="1.500" />
    </Svg>
)
const KeyboardIcon = () => (
    <Svg>
        <path d="M3 4.500h3v-1h6" stroke="#222" />
        <rect x=".5" y="6.500" width="15" height="7" fill="#fff" stroke="#222" />
        <path d="M2 8.500h12M2 10.500h12" stroke="#222" strokeDasharray="1 1" />
        <path d="M4 12.500h8" stroke="#222" />
    </Svg>
)
const QuestionIcon = () => (
    <Svg w={13} h={14}>
        <path d="M.5.5h12v13H.5z" fill="#fffff0" stroke="#333" />
        <path d="M4 5V3.500l1-1h3l1 1v2L6.500 7v2M6.500 10v2" stroke="#000" strokeWidth="1.500" />
    </Svg>
)
const FavoriteIcon = () => (
    <Svg smooth>
        <path d="M9 1h6v10l-4 3z" fill="#c8ccd8" stroke="#445" />
        <path d="M7 2l1.500 4.500L14 6l-3.500 4 2 4.500L8 12l-5 2.500 1-5L.5 6l5 .5z" fill="#ffc828" stroke="#c05010" />
    </Svg>
)
const NetAlertIcon = () => (
    <Svg smooth>
        <path d="M1 2h8v7H1z" fill="#203080" stroke="#ccd" />
        <path d="M5 5h8v7H5z" fill="#304898" stroke="#ccd" />
        <path d="M10.500 4l5 10.500h-10z" fill="#ffe800" stroke="#806000" strokeWidth=".7" />
        <path d="M10.500 7.500v3.500M10.500 12v1.500" stroke="#000" strokeWidth="1.400" />
    </Svg>
)

const tasks: { title: ReactNode; icon: ReactNode; active?: boolean }[] = [
    { title: <span className="text-[12px]">星空极速</span>, icon: <StarNetIcon /> },
    { title: 'Forex - Mark...', icon: <IeIcon /> },
    { title: 'Chart window', icon: <IeIcon /> },
    { title: <><span className="text-[12px]">欧元击穿</span>1.42...</>, icon: <IeIcon /> },
    { title: 'Microsoft Ex...', icon: <ExcelIcon />, active: true },
]

const TaskBar = () => (
    <div className="flex h-[30px] items-stretch bg-linear-to-b from-[#3a80f0] via-[#245edb] via-15% to-[#1e50c0] text-white">
        <button className="flex w-[96px] shrink-0 items-center gap-[7px] rounded-r-[10px] bg-linear-to-b from-[#5cac5c] via-[#3a963a] via-20% to-[#2f7c2f] pl-[11px]">
            <FlagIcon />
            <span className="text-[18px] leading-[24px] italic">开始</span>
        </button>
        <div className="flex w-[62px] shrink-0 items-center gap-[8px] pl-[13px]">
            <button aria-label="MS-DOS"><DosIcon /></button>
            <button aria-label="Internet Explorer"><IeIcon /></button>
        </div>
        <div className="flex min-w-0 flex-1 items-stretch gap-[2px] py-[3px]">
            {tasks.map((task, i) => (
                <button
                    key={i}
                    className={`flex min-w-0 flex-1 items-center gap-[4px] rounded-[2px] border pl-[9px] whitespace-nowrap font-['Liberation_Mono','Noto_Sans_CJK_SC',monospace] text-[10px] ${task.active ? 'border-[#153e90] bg-[#1c4cb4]' : 'border-[#2a62d8] border-t-[#6aa4ff] bg-[#3a7cf2]'}`}
                >
                    {task.icon}
                    <span>{task.title}</span>
                </button>
            ))}
        </div>
        <div className="flex w-[82px] shrink-0 items-center gap-[8px] pl-[10px]">
            <KeyboardIcon />
            <QuestionIcon />
            <div className="flex flex-col items-center gap-[4px] pl-[6px]">
                <Svg w={8} h={7}><path d="M2.500 2V.5h5v3H6M.5 2.500h5v3h-5z" stroke="#fff" /></Svg>
                <Svg w={5} h={3}><path d="M0 0h5L2.500 3z" fill="#fff" /></Svg>
            </div>
        </div>
        <div className="flex w-[95px] shrink-0 items-center bg-linear-to-b from-[#2cb0f8] via-[#1290e8] via-20% to-[#0f88e0]">
            <button aria-label="Show hidden icons" className="-ml-[8px] flex h-[17px] w-[17px] items-center justify-center rounded-full border border-[#a0d4ff] bg-[#2878e0]">
                <Svg w={7} h={9} smooth><path d="M5 1L2 4.500 5 8" stroke="#fff" strokeWidth="2" /></Svg>
            </button>
            <div className="flex items-center gap-[2px] pl-[2px]">
                <FavoriteIcon />
                <NetAlertIcon />
            </div>
            <time className="pl-[7px] font-['Liberation_Mono',monospace] text-[10px]">14:46</time>
        </div>
    </div>
)

const App = () => {
    return (
        <div className="flex min-h-screen flex-col bg-[#edeade] font-['Noto_Sans_CJK_SC',sans-serif] text-black">
            <TitleBar />
            <MenuBar />
            <Toolbars />
            <FormulaBar />
            <main className="flex border-l-2 border-[#8c897c]">
                <Sheet />
                <VerticalScroll />
            </main>
            <TabBar />
            <DrawingBar />
            <StatusBar />
            <TaskBar />
        </div>
    )
}

export default App
